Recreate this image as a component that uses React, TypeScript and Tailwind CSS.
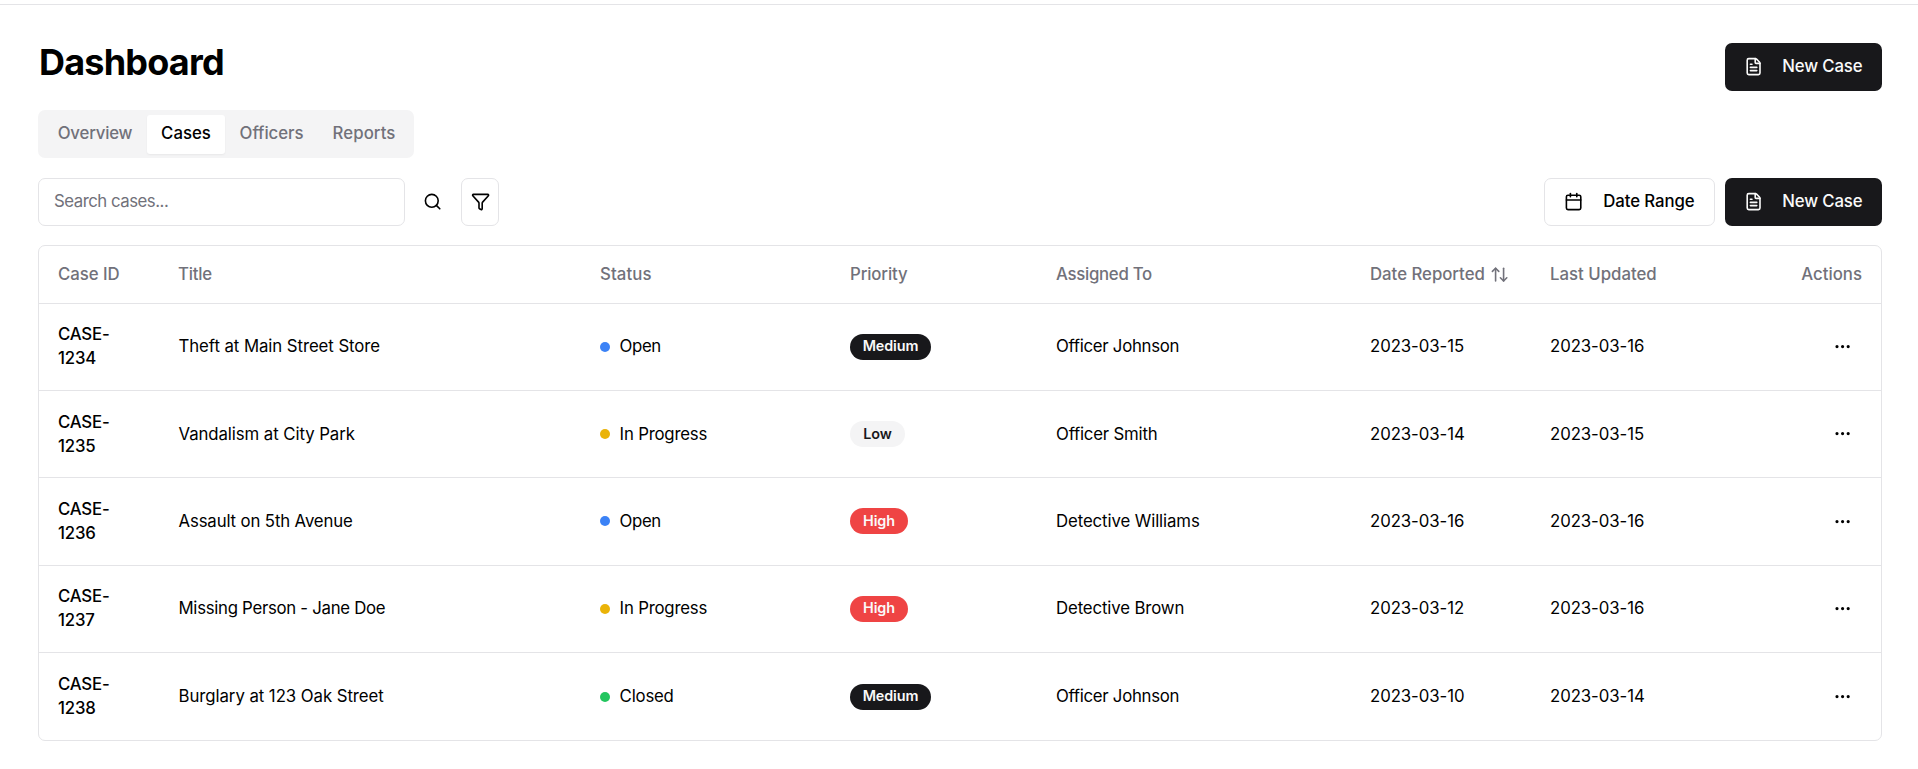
import React from "react";
import { ArrowUpDown, Calendar, FileText, Filter, MoreHorizontal, Search } from "lucide-react";

type Priority = "Medium" | "Low" | "High";
type Status = "Open" | "In Progress" | "Closed";

interface CaseRow {
  id: string;
  title: string;
  titleTracking: string;
  status: Status;
  priority: Priority;
  assignee: string;
  assigneeTracking: string;
  reported: string;
  updated: string;
}

const cases: CaseRow[] = [
  { id: "CASE-1234", title: "Theft at Main Street Store", titleTracking: "tracking-[-0.07px]", status: "Open", priority: "Medium", assignee: "Officer Johnson", assigneeTracking: "tracking-[-0.28px]", reported: "2023-03-15", updated: "2023-03-16" },
  { id: "CASE-1235", title: "Vandalism at City Park", titleTracking: "tracking-[-0.08px]", status: "In Progress", priority: "Low", assignee: "Officer Smith", assigneeTracking: "tracking-[-0.2px]", reported: "2023-03-14", updated: "2023-03-15" },
  { id: "CASE-1236", title: "Assault on 5th Avenue", titleTracking: "tracking-[-0.14px]", status: "Open", priority: "High", assignee: "Detective Williams", assigneeTracking: "tracking-[-0.1px]", reported: "2023-03-16", updated: "2023-03-16" },
  { id: "CASE-1237", title: "Missing Person - Jane Doe", titleTracking: "tracking-[-0.29px]", status: "In Progress", priority: "High", assignee: "Detective Brown", assigneeTracking: "tracking-[-0.13px]", reported: "2023-03-12", updated: "2023-03-16" },
  { id: "CASE-1238", title: "Burglary at 123 Oak Street", titleTracking: "tracking-[-0.06px]", status: "Closed", priority: "Medium", assignee: "Officer Johnson", assigneeTracking: "tracking-[-0.28px]", reported: "2023-03-10", updated: "2023-03-14" },
];

const statusStyle: Record<Status, { dot: string; tracking: string }> = {
  Open: { dot: "bg-[#3b82f6]", tracking: "tracking-[-0.4px]" },
  "In Progress": { dot: "bg-[#eab308]", tracking: "tracking-[-0.2px]" },
  Closed: { dot: "bg-[#22c55e]", tracking: "tracking-[-0.2px]" },
};

const priorityStyle: Record<Priority, string> = {
  Medium: "w-[81px] bg-[#18181b] text-[#fafafa]",
  Low: "w-[55px] bg-[#f4f4f5] text-[#18181b]",
  High: "w-[58px] bg-[#ef4444] text-[#fafafa]",
};

const tabs = [
  { label: "Overview", style: "w-[104px] tracking-[-0.2px]" },
  { label: "Cases", style: "w-[78px] rounded-[3px] bg-white text-black shadow-xs tracking-[0px]" },
  { label: "Officers", style: "w-[93px] tracking-[-0.05px]" },
  { label: "Reports", style: "w-[92px] tracking-[0.07px]" },
];

function NewCaseButton() {
  return (
    <button className="flex h-12 w-[157px] items-center rounded-[7px] bg-[#18181b] pl-[19px] font-medium text-[#fafafa]">
      <FileText className="mr-[19px] size-[19.2px]" />
      <span className="whitespace-nowrap pb-[2px] tracking-[-0.15px]">New Case</span>
    </button>
  );
}

export default function App() {
  return (
    <div className="h-[769px] overflow-hidden bg-white font-['Inter',sans-serif] text-[16.8px] leading-6 tracking-[-0.2px] text-black">
      <div className="h-[5px] border-b border-[#e4e4e7]" />
      <main className="pl-[38px] pr-9 pt-[38px]">
        <header className="flex h-12 justify-between">
          <h1 className="-mt-[2px] pl-px text-[36px] font-bold leading-[43px] tracking-[-0.8px]">Dashboard</h1>
          <NewCaseButton />
        </header>

        <nav className="mt-[19px] flex h-12 w-[376px] items-center rounded-[7px] bg-[#f4f4f5] pl-[5px] font-medium text-[#71717a]">
          {tabs.map((tab) => (
            <button key={tab.label} className={`h-[39px] whitespace-nowrap pb-[2px] text-center ${tab.style}`}>
              {tab.label}
            </button>
          ))}
        </nav>

        <div className="mt-5 flex h-12 items-center">
          <div className="flex h-12 w-[367px] items-center rounded-[7px] border border-[#e4e4e7] pl-[15px] text-[#71717a]">
            <span className="pb-[2px] tracking-[-0.49px]">Search cases...</span>
          </div>
          <button className="ml-[9px] flex h-12 w-[38px] items-center justify-center">
            <Search className="size-[19.2px]" />
          </button>
          <button className="ml-[9px] flex h-12 w-[38px] items-center justify-center rounded-[7px] border border-[#e4e4e7] pl-px">
            <Filter className="size-[19.2px] shrink-0" />
          </button>
          <button className="ml-auto mr-[10px] flex h-12 w-[171px] items-center rounded-[7px] border border-[#e4e4e7] pl-[19px] font-medium">
            <Calendar className="mr-[20px] size-[19.2px]" />
            <span className="whitespace-nowrap pb-[2px] tracking-[-0.08px]">Date Range</span>
          </button>
          <NewCaseButton />
        </div>

        <div className="mt-[19px] h-[496px] w-[1844px] rounded-[7px] border border-[#e4e4e7]">
          <table className="w-full table-fixed border-collapse text-left">
            <colgroup>
              <col className="w-[120px]" />
              <col className="w-[422px]" />
              <col className="w-[250px]" />
              <col className="w-[206px]" />
              <col className="w-[314px]" />
              <col className="w-[180px]" />
              <col className="w-[180px]" />
              <col />
            </colgroup>
            <thead>
              <tr className="h-[57px] border-b border-[#e4e4e7] text-[#71717a] [&>th]:px-[19px] [&>th]:font-medium">
                <th className="tracking-[-0.03px]">Case ID</th>
                <th>Title</th>
                <th className="tracking-[0.12px]">Status</th>
                <th className="tracking-[-0.12px]">Priority</th>
                <th className="tracking-[-0.3px]">Assigned To</th>
                <th>
                  <div className="flex items-center whitespace-nowrap tracking-[-0.02px]">
                    <span>Date Reported</span>
                    <ArrowUpDown className="ml-[5px] mt-px size-[19.2px] shrink-0" />
                  </div>
                </th>
                <th className="tracking-[0px]">Last Updated</th>
                <th className="text-right tracking-[0px]">Actions</th>
              </tr>
            </thead>
            <tbody>
              {cases.map((row) => (
                <tr key={row.id} className="h-[87.4px] border-b border-[#e4e4e7] last:border-b-0 [&>td]:px-[19px]">
                  <td className="pb-px font-medium">{row.id}</td>
                  <td className={`pb-px ${row.titleTracking}`}>
                    <span className="pl-[0.5px]">{row.title}</span>
                  </td>
                  <td>
                    <div className="flex items-center">
                      <span className={`mr-[9.6px] size-[10px] rounded-full ${statusStyle[row.status].dot}`} />
                      <span className={`pb-px ${statusStyle[row.status].tracking}`}>{row.status}</span>
                    </div>
                  </td>
                  <td>
                    <div className={`flex h-[26px] items-center justify-center rounded-full pb-px text-[14.4px] font-semibold tracking-[-0.1px] ${priorityStyle[row.priority]}`}>
                      {row.priority}
                    </div>
                  </td>
                  <td className={`pb-px ${row.assigneeTracking}`}>{row.assignee}</td>
                  <td className="pb-px tracking-[-0.08px]">{row.reported}</td>
                  <td className="pb-px tracking-[-0.08px]">{row.updated}</td>
                  <td>
                    <button className="ml-auto mr-[0.4px] flex size-[38px] items-center justify-center">
                      <MoreHorizontal className="size-[19.2px]" />
                    </button>
                  </td>
                </tr>
              ))}
            </tbody>
          </table>
        </div>
      </main>
    </div>
  );
}
